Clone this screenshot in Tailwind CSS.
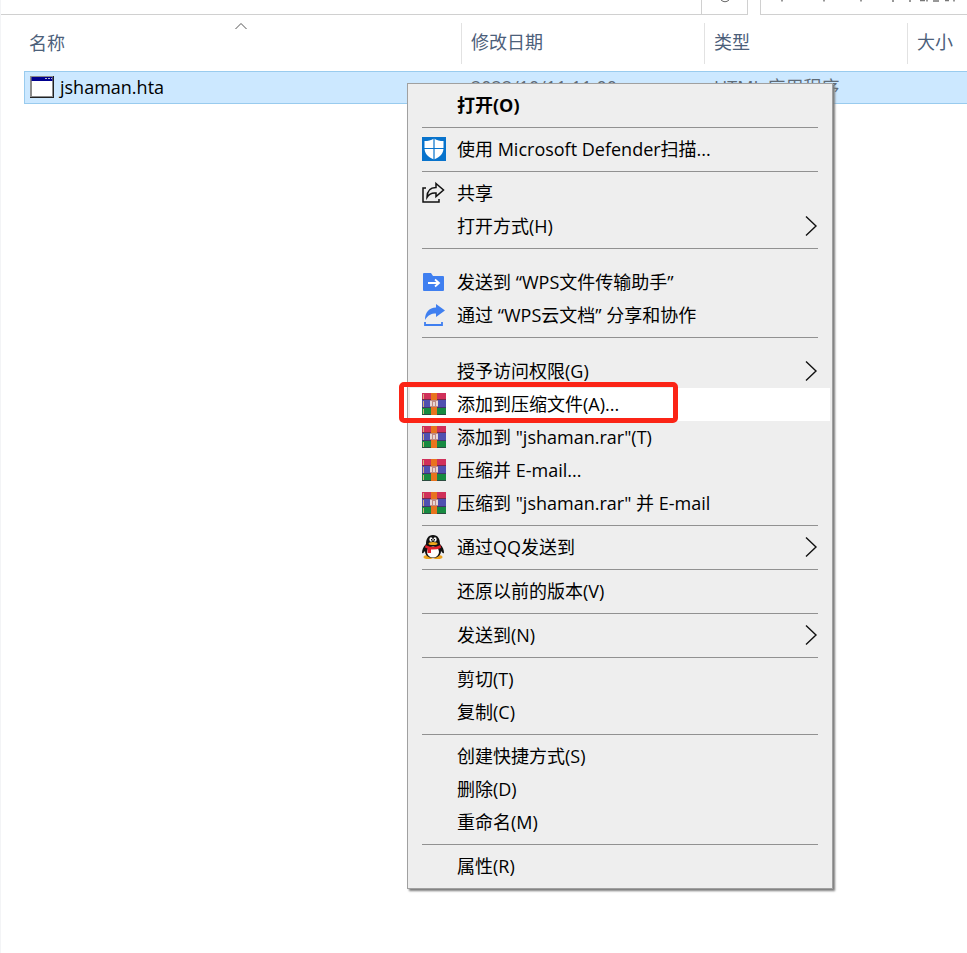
<!DOCTYPE html>
<html lang="zh-CN">

<head>
    <meta charset="UTF-8">
    <meta name="viewport" content="width=device-width, initial-scale=1.0">
    <title>jshaman.hta</title>
    <script src="https://cdn.jsdelivr.net/npm/@tailwindcss/browser@4"></script>
</head>

<body class="relative min-h-screen overflow-x-hidden border-l border-gray-100 bg-white font-['Open_Sans','Noto_Sans_CJK_SC',sans-serif] text-[18px] leading-[33px] text-black">
    <!-- shared shapes -->
    <svg class="hidden">
        <symbol id="arrow" viewBox="0 0 14 22">
            <path d="M2 1.500L12 11L2 20.500" fill="none" stroke="#111" stroke-width="1.400" />
        </symbol>
        <symbol id="rar" viewBox="0 0 24 22">
            <rect width="24" height="7" fill="#d0305a" />
            <rect y="7" width="24" height="8" fill="#5050b0" />
            <rect y="15" width="24" height="7" fill="#178a41" />
            <path d="M0 6.500H24M0 14.500H24M0 21.500H24" stroke="#3a2340" opacity=".6" />
            <path d="M1.500 1V6M1.500 8V14M1.500 16V21" stroke="#d8b07a" />
            <rect x="9" width="6" height="22" fill="#e8731e" />
            <path d="M8 7H16V14H8Z" fill="#c08a84" />
            <path d="M9 8V13M12 9V13M15 8V13" stroke="#fff" stroke-width="1.300" />
        </symbol>
    </svg>

    <!-- bottom edge of the address bar and the search box -->
    <header class="flex h-[15px] items-end overflow-hidden text-gray-600">
        <div class="h-[15px] flex-1 border-b border-[#d0d0d0]"></div>
        <div class="flex h-[15px] w-[47px] justify-center border-x border-b border-[#d0d0d0]">
            <svg class="h-[3px] w-3" viewBox="0 0 12 3"><path d="M2 0Q6 3.500 10 0" fill="none" stroke="#666" /></svg>
        </div>
        <div class="ml-3 flex h-[15px] w-[207px] border-b border-l border-[#d0d0d0]">
            <svg class="h-[3px] w-full" viewBox="0 0 206 3"><path d="M21 0V1.500M63 0V1.500M100 0V1.500M132 0V2M149 0V2M159 0.500H164M166 0V1.500M172 1H178M184 0.500H188M193 0V1.500" fill="none" stroke="#777" stroke-width="1.500" /></svg>
        </div>
    </header>

    <table class="w-full table-fixed border-separate border-spacing-0 text-left">
        <colgroup>
            <col class="w-[23px]">
            <col>
            <col class="w-[243px]">
            <col class="w-[203px]">
            <col class="w-[60px]">
        </colgroup>
        <thead>
            <tr class="text-[#4c607a]">
                <td></td>
                <th class="relative h-[56px] pl-[5px] font-normal">名称
                    <svg class="absolute top-[7px] left-1/2 -ml-2 h-2 w-3" viewBox="0 0 12 8"><path d="M0.500 7L6 1.500L11.500 7" fill="none" stroke="#555" /></svg>
                </th>
                <th class="font-normal"><div class="my-1 border-l border-[#e2e2e2] pt-[3px] pb-[5px] pl-[9px]">修改日期</div></th>
                <th class="font-normal"><div class="my-1 border-l border-[#e2e2e2] pt-[3px] pb-[5px] pl-[9px]">类型</div></th>
                <th class="font-normal"><div class="my-1 border-l border-[#e2e2e2] pt-[3px] pb-[5px] pl-[9px]">大小</div></th>
            </tr>
        </thead>
        <tbody>
            <tr class="leading-[31px] text-[#5f6b76]">
                <td></td>
                <td class="border-y border-l border-[#99cbee] bg-[#cce8ff] pl-[5px] text-black">
                    <div class="flex items-center gap-[6px]">
                        <svg class="mb-[2px] h-[22px] w-6" viewBox="0 0 24 22">
                            <rect width="24" height="22" fill="#222" />
                            <path d="M0 0H23V21H0Z" fill="#8b8b8b" />
                            <rect x="1.500" y="1" width="21" height="4" fill="#00008f" />
                            <path d="M15 2.500H17M18 2.500H20M21 2.500H22" stroke="#bbc" />
                            <rect x="2" y="5" width="20" height="15" fill="#fff" />
                        </svg>
                        jshaman.hta
                    </div>
                </td>
                <td class="border-y border-[#99cbee] bg-[#cce8ff] pl-[10px]">2022/10/11 11:00</td>
                <td class="border-y border-[#99cbee] bg-[#cce8ff] pl-[10px]">HTML 应用程序</td>
                <td class="border-y border-[#99cbee] bg-[#cce8ff]"></td>
            </tr>
        </tbody>
    </table>

    <!-- context menu -->
    <nav class="absolute top-[83px] left-[406px] w-[426px] border border-[#a0a0a0] bg-[#eeeeee] px-[2px] py-[5px] shadow-[2px_2px_2px_#7c7c7c]">
        <button class="flex w-full pl-[47px] font-bold">打开(O)</button>
        <hr class="mx-3 my-[5px] border-[#919191]">
        <button class="flex w-full items-center pl-3">
            <svg class="mr-[11px] mb-[2px] size-6" viewBox="0 0 24 24">
                <rect width="24" height="24" fill="#0873cc" />
                <path d="M12 1.500C9 3.500 6 4 2.500 4V11C2.500 16.500 6 20 12 22.500C18 20 21.500 16.500 21.500 11V4C18 4 15 3.500 12 1.500Z" fill="#fff" />
                <path d="M12 1V23M2 11.500H22" stroke="#0873cc" stroke-width="1.200" />
            </svg>
            使用 Microsoft Defender扫描...
        </button>
        <hr class="mx-3 my-[5px] border-[#919191]">
        <button class="flex w-full items-center pl-3">
            <svg class="mr-[11px] mb-[2px] size-6" viewBox="0 0 24 24" fill="none" stroke="#111" stroke-width="1.500">
                <path d="M4 7H1V21H17V18" />
                <path d="M14 2.500L21.500 9L14 15.500V12C9.500 11.500 7 13 5 16.500C5 10 8.500 6.500 14 6.500Z" />
            </svg>
            共享
        </button>
        <button class="flex w-full items-center justify-between pr-3 pl-[47px]">打开方式(H)<svg class="mb-[2px] h-[22px] w-[14px]"><use href="#arrow" /></svg></button>
        <hr class="mx-3 my-[5px] border-[#919191]">
        <button class="mt-[17px] flex w-full items-center pl-3">
            <svg class="mr-[11px] mb-[2px] size-6" viewBox="0 0 24 24">
                <path d="M1 4Q1 3 2 3H9L11 6H21Q22 6 22 7V20Q22 21 21 21H2Q1 21 1 20Z" fill="#3f7ff0" />
                <path d="M6 13H17M13 9.500L17 13L13 16.500" fill="none" stroke="#fff" stroke-width="1.800" />
            </svg>
            发送到 “WPS文件传输助手”
        </button>
        <button class="flex w-full items-center pl-3">
            <svg class="mr-[11px] mb-[2px] size-6" viewBox="0 0 24 24">
                <path d="M14 1L23 7.500L14 14V10.500C9 10.500 6 12 3 17C3 9 7 5 14 4.500Z" fill="#3f7ff0" />
                <path d="M3 19V22H20V19" fill="none" stroke="#3f7ff0" stroke-width="1.800" />
            </svg>
            通过 “WPS云文档” 分享和协作
        </button>
        <hr class="mx-3 my-[5px] border-[#919191]">
        <button class="mt-[17px] flex w-full items-center justify-between pr-3 pl-[47px]">授予访问权限(G)<svg class="mb-[2px] h-[22px] w-[14px]"><use href="#arrow" /></svg></button>
        <button class="relative flex w-full items-center bg-white pl-3">
            <svg class="mr-[11px] mb-[2px] h-[22px] w-6"><use href="#rar" /></svg>
            添加到压缩文件(A)...
            <span class="absolute -top-[6px] -left-[11px] h-[41px] w-[279px] rounded-[5px] border-[5px] border-[#fb2416]"></span>
        </button>
        <button class="flex w-full items-center pl-3"><svg class="mr-[11px] mb-[2px] h-[22px] w-6"><use href="#rar" /></svg>添加到 "jshaman.rar"(T)</button>
        <button class="flex w-full items-center pl-3"><svg class="mr-[11px] mb-[2px] h-[22px] w-6"><use href="#rar" /></svg>压缩并 E-mail...</button>
        <button class="flex w-full items-center pl-3"><svg class="mr-[11px] mb-[2px] h-[22px] w-6"><use href="#rar" /></svg>压缩到 "jshaman.rar" 并 E-mail</button>
        <hr class="mx-3 my-[5px] border-[#919191]">
        <button class="flex w-full items-center pr-3 pl-3">
            <svg class="mr-[11px] mb-[2px] size-6" viewBox="0 0 24 24">
                <ellipse cx="6.500" cy="22" rx="5" ry="2" fill="#eda21c" />
                <ellipse cx="15.500" cy="22" rx="5" ry="2" fill="#eda21c" />
                <path d="M11 0C6 0 4 4 4 9C1 12 0 15 0 18C1 19 2 17 3 16C3 20 6 23 11 23C16 23 19 20 19 16C20 17 21 19 22 18C22 15 21 12 18 9C18 4 16 0 11 0Z" fill="#111" />
                <ellipse cx="11" cy="17" rx="6" ry="5.500" fill="#fff" />
                <ellipse cx="9" cy="4.500" rx="1.600" ry="2.200" fill="#fff" />
                <ellipse cx="13" cy="4.500" rx="1.600" ry="2.200" fill="#fff" />
                <path d="M9.500 4V5.500M12.500 4V5.500" stroke="#111" />
                <ellipse cx="11" cy="8.500" rx="4.500" ry="1.600" fill="#f0a81c" />
                <path d="M3.500 10Q11 14 18.500 10L19 13Q14 15 9 14.500V18H5.500V13.500L3 12.500Z" fill="#e3202b" />
            </svg>
            通过QQ发送到
            <svg class="mb-[2px] ml-auto h-[22px] w-[14px]"><use href="#arrow" /></svg>
        </button>
        <hr class="mx-3 my-[5px] border-[#919191]">
        <button class="flex w-full pl-[47px]">还原以前的版本(V)</button>
        <hr class="mx-3 my-[5px] border-[#919191]">
        <button class="flex w-full items-center justify-between pr-3 pl-[47px]">发送到(N)<svg class="mb-[2px] h-[22px] w-[14px]"><use href="#arrow" /></svg></button>
        <hr class="mx-3 my-[5px] border-[#919191]">
        <button class="flex w-full pl-[47px]">剪切(T)</button>
        <button class="flex w-full pl-[47px]">复制(C)</button>
        <hr class="mx-3 my-[5px] border-[#919191]">
        <button class="flex w-full pl-[47px]">创建快捷方式(S)</button>
        <button class="flex w-full pl-[47px]">删除(D)</button>
        <button class="flex w-full pl-[47px]">重命名(M)</button>
        <hr class="mx-3 my-[5px] border-[#919191]">
        <button class="flex w-full pl-[47px]">属性(R)</button>
    </nav>
</body>

</html>
